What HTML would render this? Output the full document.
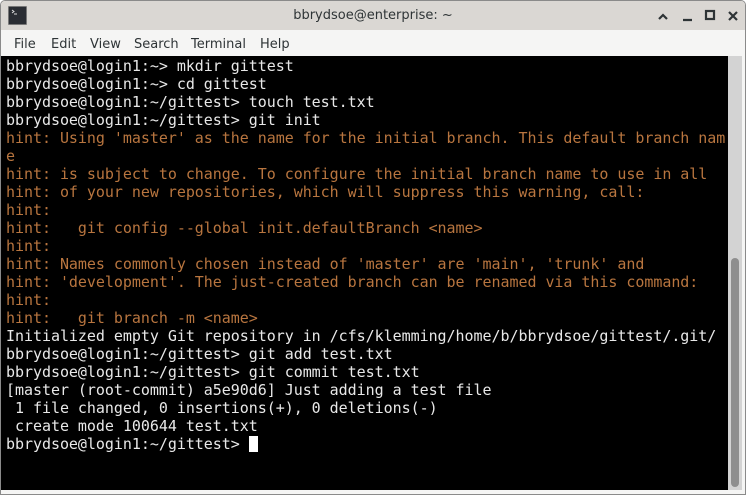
<!DOCTYPE html>
<html><head><style>
body{margin:0;width:746px;height:495px;overflow:hidden;background:#fff;font-family:"Liberation Sans","DejaVu Sans",sans-serif;}
.win{position:absolute;left:0;top:0;width:744px;height:493px;border:1px solid #8a8a8a;border-radius:5px 5px 0 0;background:#f5f5f4;overflow:hidden}
.title{position:absolute;left:0;top:0;width:744px;height:29px;background:#dad7d3;}
.title .t{position:absolute;left:0;width:744px;top:7px;text-align:center;font-size:13px;color:#2e3436;font-family:"DejaVu Sans",sans-serif;}
.ico{position:absolute;left:7px;top:5px;width:17px;height:17px;background:#2a2d33;border:1px solid #777;border-radius:1px}
.menu{position:absolute;top:29px;left:0;width:744px;height:26px;background:#f5f5f4;font-family:"DejaVu Sans",sans-serif;font-size:13px;color:#2e3436}
.menu span{position:absolute;top:7px}
.term{position:absolute;left:0;top:55px;width:727px;height:434px;background:#000;}
pre{margin:0;position:absolute;left:5px;top:1px;font-family:"DejaVu Sans Mono","Liberation Mono",monospace;font-size:15px;letter-spacing:-0.04px;line-height:18px;color:#e8e8e8;}
.h{color:#b8753f}
.sb{position:absolute;left:727px;top:55px;width:14px;height:434px;background:#d3d3d3}
.th{position:absolute;left:3px;top:202px;width:8px;height:229px;background:#8e8e8e;border-radius:4px}
.cur{display:inline-block;width:9px;height:16px;background:#fff;vertical-align:-3px}
</style></head><body>
<div class="win">
<div class="title"><div class="ico"><svg width="17" height="17"><path d="M3 3l2 1.5-2 1.5M5 7h3" stroke="#ddd" stroke-width="1" fill="none"/></svg></div><div class="t">bbrydsoe@enterprise: ~</div>
<svg style="position:absolute;left:650px;top:8px" width="90" height="14"><path d="M8 10l4-4 4 4" stroke="#2e3436" stroke-width="2.2" fill="none"/><path d="M32 11h9" stroke="#2e3436" stroke-width="2.2"/><rect x="55" y="2" width="8" height="8" stroke="#2e3436" stroke-width="2.2" fill="none"/><path d="M78 3l8 8M86 3l-8 8" stroke="#2e3436" stroke-width="2.2"/></svg></div>
<div class="menu"><span style="left:13px">File</span><span style="left:50px">Edit</span><span style="left:89px">View</span><span style="left:133px">Search</span><span style="left:190px">Terminal</span><span style="left:259px">Help</span></div>
<div class="term"><pre>bbrydsoe@login1:~&gt; mkdir gittest
bbrydsoe@login1:~&gt; cd gittest
bbrydsoe@login1:~/gittest&gt; touch test.txt
bbrydsoe@login1:~/gittest&gt; git init
<span class="h">hint: Using 'master' as the name for the initial branch. This default branch nam
e
hint: is subject to change. To configure the initial branch name to use in all
hint: of your new repositories, which will suppress this warning, call:
hint:
hint:   git config --global init.defaultBranch &lt;name&gt;
hint:
hint: Names commonly chosen instead of 'master' are 'main', 'trunk' and
hint: 'development'. The just-created branch can be renamed via this command:
hint:
hint:   git branch -m &lt;name&gt;</span>
Initialized empty Git repository in /cfs/klemming/home/b/bbrydsoe/gittest/.git/
bbrydsoe@login1:~/gittest&gt; git add test.txt
bbrydsoe@login1:~/gittest&gt; git commit test.txt
[master (root-commit) a5e90d6] Just adding a test file
 1 file changed, 0 insertions(+), 0 deletions(-)
 create mode 100644 test.txt
bbrydsoe@login1:~/gittest&gt; <span class="cur"></span></pre></div>
<div class="sb"><div class="th"></div></div>
</div>
</body></html>
